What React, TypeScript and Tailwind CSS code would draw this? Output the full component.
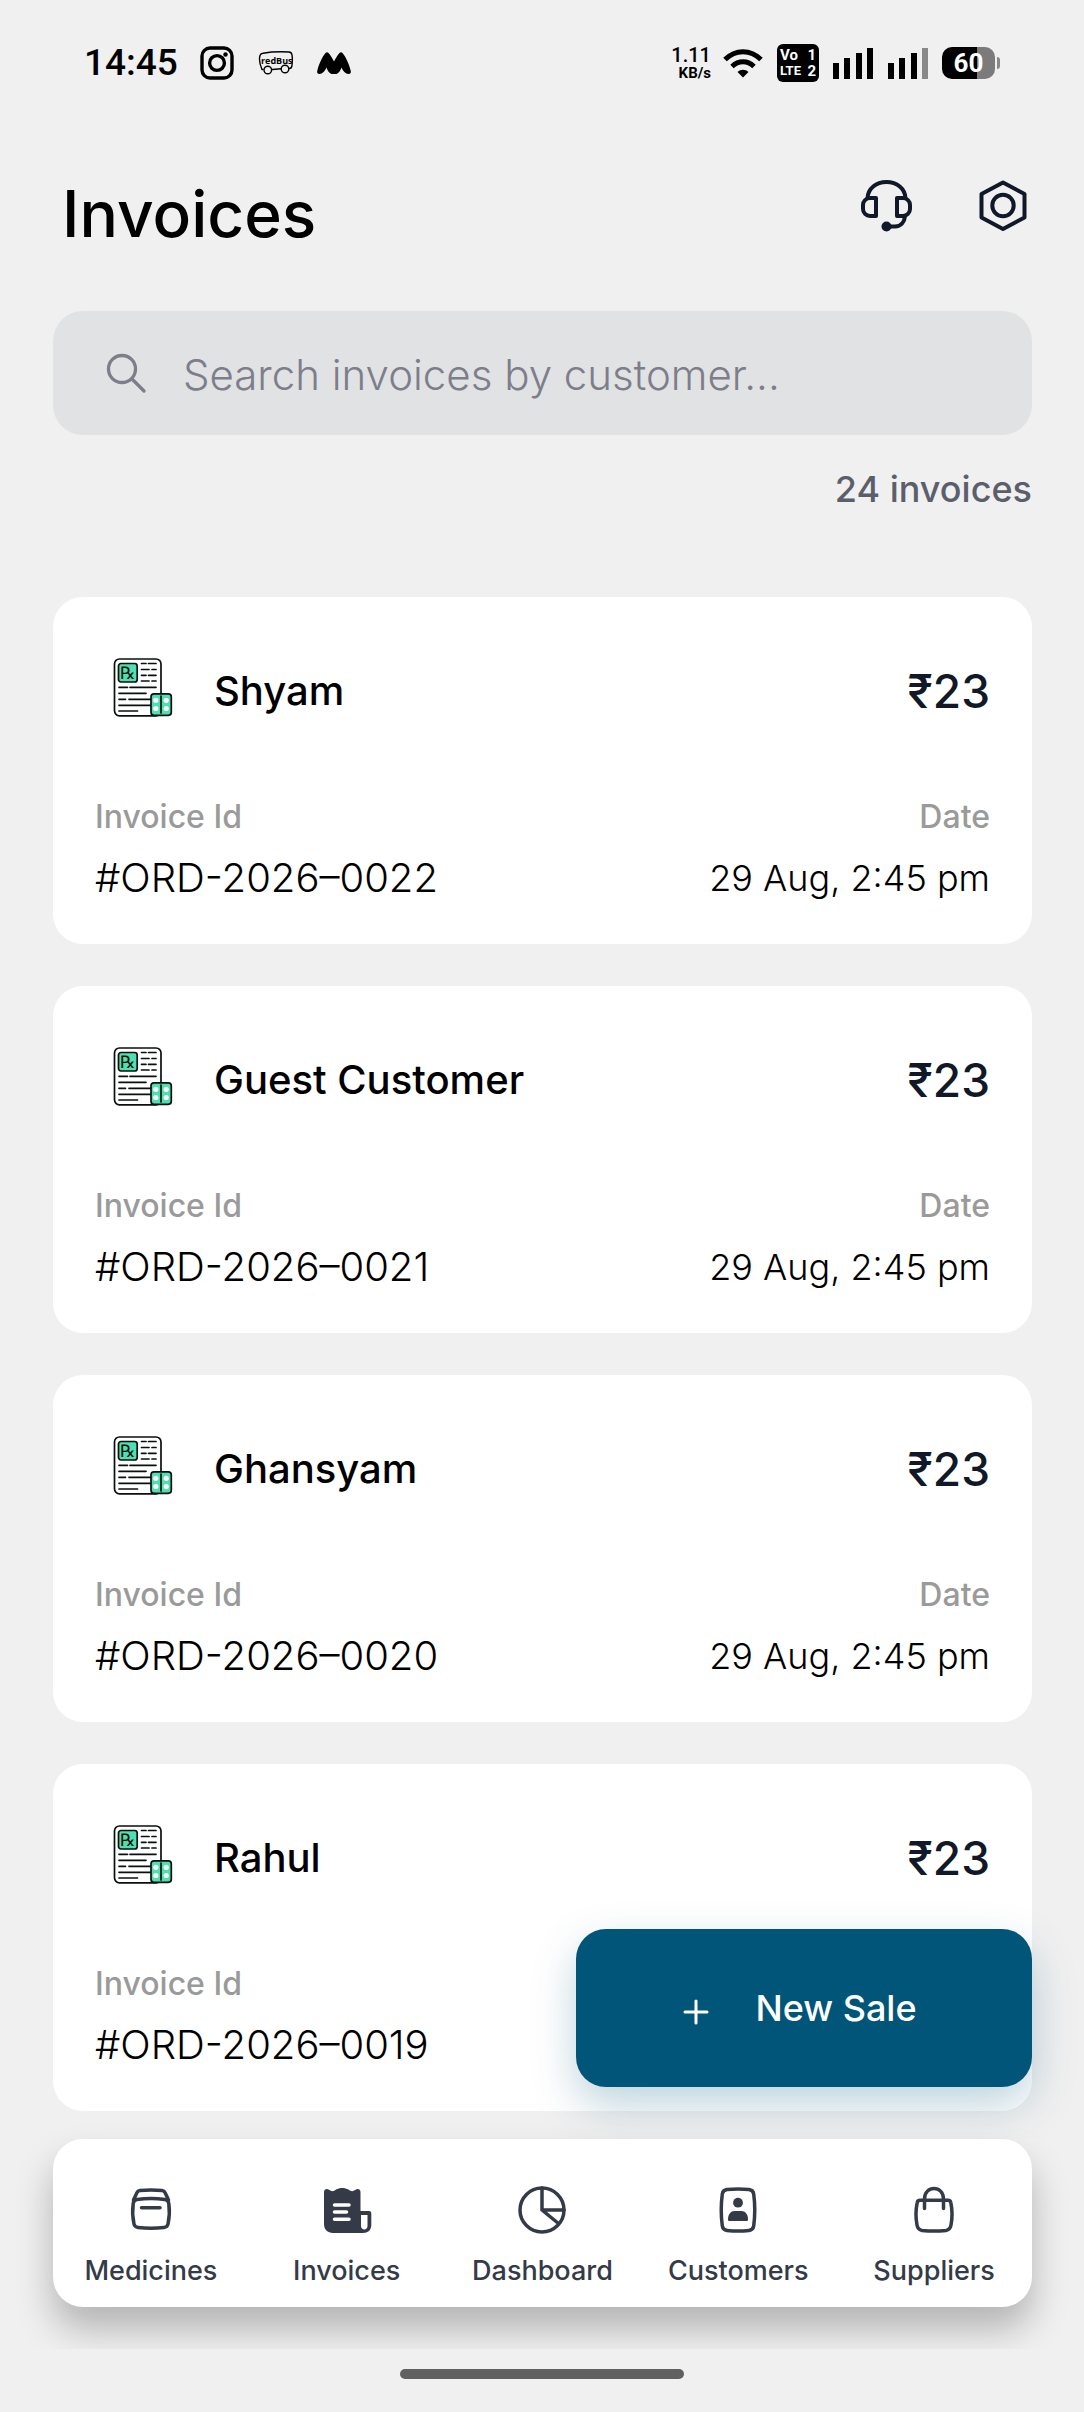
import type { ReactNode } from "react";

const invoices = [
  { customer: "Shyam", id: "#ORD-2026–0022", date: "29 Aug, 2:45 pm", total: "₹23" },
  { customer: "Guest Customer", id: "#ORD-2026–0021", date: "29 Aug, 2:45 pm", total: "₹23" },
  { customer: "Ghansyam", id: "#ORD-2026–0020", date: "29 Aug, 2:45 pm", total: "₹23" },
  { customer: "Rahul", id: "#ORD-2026–0019", date: "29 Aug, 2:45 pm", total: "₹23" },
];

function SignalBars({ weak = false }: { weak?: boolean }) {
  return (
    <svg width="40" height="31" viewBox="0 0 40 31" aria-hidden="true">
      <rect x="0" y="15" width="6" height="16" />
      <rect x="11" y="10" width="6" height="21" />
      <rect x="23" y="5" width="6" height="26" />
      <rect x="34" y="0" width="6" height="31" fill={weak ? "#888888" : "#000000"} />
    </svg>
  );
}

function StatusBar() {
  return (
    <div className="flex h-[126px] shrink-0 items-center justify-between px-[84px] font-['Roboto',sans-serif] text-black">
      <div className="flex items-center">
        <span className="text-[37px] font-medium leading-10">14:45</span>
        <svg className="ml-[22px]" width="34" height="34" viewBox="0 0 34 34" fill="none" stroke="#000" strokeWidth="3.4" aria-hidden="true">
          <rect x="2" y="2" width="30" height="30" rx="8" />
          <circle cx="17" cy="17" r="7.4" />
          <circle cx="25.5" cy="8.5" r="2.2" fill="#000" stroke="none" />
        </svg>
        <svg className="ml-6" width="36" height="26" viewBox="0 0 36 26" fill="none" stroke="#000" strokeWidth="1.4" aria-hidden="true">
          <path d="M5.5 19.5H4C2 15 1 9 2 5.5C2.5 4 3.5 3.5 5 3.3C13 1.8 22 1.6 31 2c2 .2 2.8 1.2 3 3 .6 4 .4 8-.2 11.500-.3 1.500-1 2-2.500 2H31M14 19.500l9.500-.8" />
          <circle cx="9.8" cy="20" r="3.8" />
          <circle cx="27" cy="19" r="3.8" />
          <text x="3" y="13.5" fontSize="9" fontWeight="700" fill="#000" stroke="none" fontFamily="Open Sans, sans-serif">
            redBus
          </text>
        </svg>
        <svg className="ml-[22px]" width="36" height="24" viewBox="0 0 36 24" aria-hidden="true">
          <path d="M1.200 20C2.500 14 6.500 5 9.500 2c1-1 2-1 3 0 2 2 4 5.500 5.500 8.500 1.500-3 3.500-6.500 5.500-8.500 1-1 2-1 3 0 3 3 7 12 8.300 18 .4 2-.6 3-2.300 3-3 0-5.500-3-7-6.500-.9 2.500-2.500 6-5 6.400-1.200.2-1.800.1-2.500.1s-1.300.1-2.500-.1c-2.500-.4-4.100-3.900-5-6.400C9 20 6.500 23 3.500 23c-1.700 0-2.700-1-2.300-3z" />
        </svg>
      </div>

      <div className="flex items-center">
        <div className="flex flex-col items-end">
          <span className="text-xl font-medium leading-5">1.11</span>
          <span className="text-[15px] font-bold leading-4">KB/s</span>
        </div>
        <svg className="ml-3" width="40" height="30" viewBox="0 0 40 30" fill="none" stroke="#000" strokeWidth="5" aria-hidden="true">
          <path d="M2 11.500C12.500 1 27.500 1 38 11.500" />
          <path d="M9 18.500c6.500-6.200 15.500-6.200 22 0" />
          <path d="M14.500 24c3.300-3 7.700-3 11 0L20 29.500z" fill="#000" stroke="none" />
        </svg>
        <div className="ml-[14px] flex h-[38px] w-[42px] flex-col justify-center rounded-md bg-black px-[3px] text-[15px] font-bold leading-4 text-white">
          <span className="flex justify-between">
            <span>Vo</span>
            <span>1</span>
          </span>
          <span className="flex justify-between">
            <span className="text-[13px] leading-4">LTE</span>
            <span>2</span>
          </span>
        </div>
        <div className="ml-[14px] flex gap-[15px]">
          <SignalBars />
          <SignalBars weak />
        </div>
        <div className="ml-[14px] flex h-8 w-[53px] items-center justify-center rounded-[10px] bg-[linear-gradient(90deg,#000_66%,#7b7b7b_66%)] text-[26px] font-bold leading-8 text-white">
          60
        </div>
        <div className="ml-0.5 h-3 w-[3px] rounded-r bg-[#888888]" />
      </div>
    </div>
  );
}

function PrescriptionIcon() {
  return (
    <svg width="60" height="60" viewBox="0 0 60 60" fill="none" stroke="#0b0f0e" strokeWidth="1.7" strokeLinecap="round" aria-hidden="true">
      <rect x="1.5" y="2" width="46.5" height="56.8" rx="5" />
      <rect x="5.5" y="6.5" width="18.7" height="18.5" rx="2.5" fill="#4fe0b0" />
      <text x="7" y="22" fontSize="17" fill="#0b0f0e" stroke="none" fontFamily="DejaVu Sans, sans-serif">
        ℞
      </text>
      <path d="M28.500 6.500H33M35.500 6.500h7.500M28.500 12.500H36M39 12.500h4M28.500 18.300H33M35.500 18.300h7.500M28.500 24H36M39 24h4" />
      <path d="M6 30.300h8.500M17 30.300h26M6 36.300h27M6 42.300h6.500M16 42.300h22M6 48.300h32M6 54h18.500" />
      <rect x="38" y="36.8" width="20.3" height="21.5" rx="3" fill="#4fe0b0" />
      <path d="M48 39v17" />
      <g fill="#fff" stroke="none">
        <circle cx="42.8" cy="43.3" r="2.6" />
        <circle cx="53.2" cy="43.3" r="2.6" />
        <circle cx="42.8" cy="51.5" r="2.6" />
        <circle cx="53.2" cy="51.5" r="2.6" />
      </g>
    </svg>
  );
}

function InvoiceCard({ customer, id, date, total }: (typeof invoices)[number]) {
  return (
    <li className="rounded-[30px] bg-white p-[42px]">
      <div className="flex h-[95px] items-center">
        <div className="flex w-[95px] justify-center">
          <PrescriptionIcon />
        </div>
        <h2 className="ml-6 mt-2 flex-1 text-[40px] font-medium leading-[48px] text-black">{customer}</h2>
        <span className="mt-2 text-[46px] font-medium leading-[48px] text-[#111827]">{total}</span>
      </div>
      <div className="mt-[62px] flex justify-between">
        <div>
          <p className="text-[32px] font-medium leading-[42px] text-[#9a9a9a]">Invoice Id</p>
          <p className="mt-4 text-[40px] font-light leading-[48px] text-black">{id}</p>
        </div>
        <div className="text-right">
          <p className="text-[32px] font-medium leading-[42px] text-[#9a9a9a]">Date</p>
          <p className="mt-4 text-[36px] font-light leading-[48px] text-black">{date}</p>
        </div>
      </div>
    </li>
  );
}

function TabIcon({ children }: { children: ReactNode }) {
  return (
    <svg width="50" height="50" viewBox="-1 -1 50 50" fill="none" stroke="#343a48" strokeWidth="3.5" strokeLinecap="round" strokeLinejoin="round" aria-hidden="true">
      {children}
    </svg>
  );
}

const tabs = [
  {
    label: "Medicines",
    icon: (
      <TabIcon>
        <path d="M6.500 14 10 6.500C10.500 5.300 11.500 4.800 13 4.600c7-.8 15-.8 22 0 1.500.2 2.500.7 3 1.900L41.500 14" />
        <path d="M10 13.500c9-1.300 19-1.300 28 0 2.500.4 3.400 1.500 3.800 4 .9 6.500.6 14-.8 20.500-.5 2.300-1.500 3.200-4 3.500-8.500 1-17.500 1-26 0-2.500-.3-3.500-1.200-4-3.500-1.400-6.500-1.700-14-.8-20.500.4-2.500 1.300-3.600 3.800-4z" />
        <path d="M14.500 21.700H33" />
      </TabIcon>
    ),
  },
  {
    label: "Invoices",
    icon: (
      <TabIcon>
        <path
          fill="#343a48"
          stroke="none"
          d="M1 6c0-3 3-4 5-2.200 2.500 2 4.500 2 7-.2 3.500-2.200 9-2.200 12.500 0 2.500 2.200 4.500 2.200 7 .2C34.500 2 37.500 3 37.500 6v19H46a2.300 2.300 0 0 1 2.300 2.300V39c0 5-3.300 8-8.300 8H10c-5.500 0-9-3.500-9-9z"
        />
        <path d="M11.500 19H26M11.500 26h12M11.500 33.200H26" stroke="#fff" />
        <path d="M38 29h6.500v11c0 4.500-6.500 4.500-6.500 0z" fill="#fff" stroke="none" />
      </TabIcon>
    ),
  },
  {
    label: "Dashboard",
    icon: (
      <TabIcon>
        <circle cx="24" cy="24" r="22" />
        <path d="M24 2v22h22M24 24l16.500 13.500" />
      </TabIcon>
    ),
  },
  {
    label: "Customers",
    icon: (
      <TabIcon>
        <path d="M13 3.600c7-.9 15-.9 22 0 2.800.4 4.300 1.700 4.700 4.400 1.400 10.500 1.400 21.500 0 32-.4 2.700-1.900 4-4.700 4.400-7 .9-15 .9-22 0-2.800-.4-4.300-1.700-4.700-4.400-1.400-10.500-1.400-21.500 0-32 .4-2.700 1.900-4 4.700-4.400z" />
        <circle cx="24" cy="16.7" r="4.9" fill="#343a48" stroke="none" />
        <path d="M14 33.500C14 28 17 25 20.500 25h7c3.500 0 6.500 3 6.500 8.500 0 1-.6 1.500-1.500 1.500h-17c-.9 0-1.500-.5-1.500-1.500z" fill="#343a48" stroke="none" />
      </TabIcon>
    ),
  },
  {
    label: "Suppliers",
    icon: (
      <TabIcon>
        <path d="M10 14.300h28c1.800 0 2.500.6 2.800 2.300 1.600 7.500 1.600 15 .2 22.400-.6 3.500-1.800 4.900-5 5.400-8 .9-16 .9-24 0-3.200-.5-4.400-1.900-5-5.400-1.400-7.400-1.400-14.900.2-22.400.3-1.700 1-2.300 2.800-2.300z" />
        <path d="M14.500 22.500V13c0-14 19-14 19 0v9.500" />
      </TabIcon>
    ),
  },
];

export default function App() {
  return (
    <div className="flex h-screen flex-col overflow-hidden bg-[#f0f0f0] font-['Inter',sans-serif]">
      <StatusBar />

      <main className="relative min-h-0 flex-1 overflow-hidden">
        <header className="flex items-start justify-between pl-[62px] pr-[54px] pt-12">
          <h1 className="text-[64px] font-medium leading-[80px] text-black">Invoices</h1>
          <div className="mt-[5px] flex gap-[62px]">
            <button type="button" aria-label="Support">
              <svg width="54" height="54" viewBox="0 0 54 54" fill="none" stroke="#111827" strokeWidth="4" strokeLinejoin="round" aria-hidden="true">
                <path d="M7.500 19C8 9.500 16 3 26.500 3S45 9.500 45.500 19" />
                <path d="M16 19h-6a7 7 0 0 0-7 7v4a7 7 0 0 0 7 7h6zM37 19h6a7 7 0 0 1 7 7v4a7 7 0 0 1-7 7h-6z" />
                <path d="M45 37c-.5 6-4 10.500-10 10.500h-8" />
                <circle cx="26.5" cy="47.5" r="5" fill="#111827" stroke="none" />
              </svg>
            </button>
            <button type="button" aria-label="Settings">
              <svg width="54" height="54" viewBox="0 0 54 54" fill="none" stroke="#111827" strokeWidth="4" strokeLinejoin="round" aria-hidden="true">
                <path d="M27 3.500 48.500 15v23.500L27 50 5.500 38.500V15z" />
                <circle cx="27" cy="26.5" r="10.7" />
              </svg>
            </button>
          </div>
        </header>

        <div className="pl-[53px] pr-[52px]">
          <label className="mt-[57px] flex h-[124px] items-center rounded-[30px] bg-[#e1e2e4] px-[52px]">
            <svg width="42" height="42" viewBox="0 0 42 42" fill="none" stroke="#7d7e8a" strokeWidth="3.3" strokeLinecap="round" aria-hidden="true">
              <circle cx="17" cy="17" r="13.5" />
              <path d="m27 27 12 12" />
            </svg>
            <input
              type="search"
              aria-label="Search invoices"
              placeholder="Search invoices by customer..."
              className="ml-9 min-w-0 flex-1 bg-transparent pt-1 text-[42px] font-light leading-[56px] text-black outline-none placeholder:text-[#7d7e8a]"
            />
          </label>
          <p className="mt-[30px] text-right text-[36px] font-medium leading-[48px] text-[#5b5f6b]">24 invoices</p>

          <ul className="mt-[84px] flex flex-col gap-[42px]">
            {invoices.map((invoice) => (
              <InvoiceCard key={invoice.id} {...invoice} />
            ))}
          </ul>
        </div>

        <button
          type="button"
          className="absolute bottom-[52px] right-[52px] flex h-[158px] w-[456px] items-center justify-center gap-[46px] rounded-[30px] bg-[#005578] pr-2 text-[36px] font-medium leading-[48px] text-white shadow-[0_18px_44px_rgba(0,85,120,0.25)]"
        >
          <svg className="mt-2" width="26" height="26" viewBox="0 0 26 26" stroke="#fff" strokeWidth="3" strokeLinecap="round" aria-hidden="true">
            <path d="M13 2v22M2 13h22" />
          </svg>
          New Sale
        </button>
      </main>

      <nav className="relative z-10 mb-[42px] ml-[53px] mr-[52px] grid h-[168px] shrink-0 grid-cols-5 rounded-[30px] bg-white shadow-[0_22px_36px_rgba(0,0,0,0.25)]">
        {tabs.map((tab) => (
          <a key={tab.label} href="#" className="flex flex-col items-center pt-[46px] text-[27px] font-medium leading-8 text-[#343a48]">
            {tab.icon}
            <span className="mt-5">{tab.label}</span>
          </a>
        ))}
      </nav>

      {/* gesture bar */}
      <div className="relative z-20 flex h-[63px] shrink-0 justify-center bg-[#f0f0f0] pt-5">
        <div className="h-2.5 w-[284px] rounded-full bg-[#606060]" />
      </div>
    </div>
  );
}
